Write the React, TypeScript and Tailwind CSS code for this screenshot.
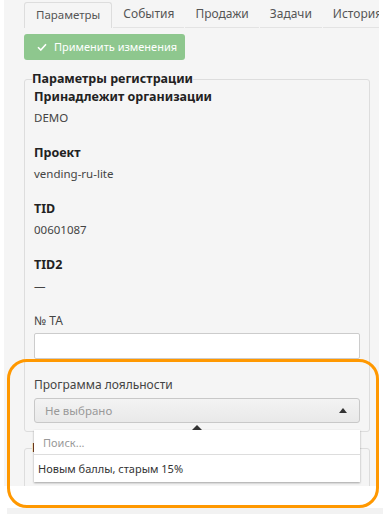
import React from 'react';

const tabs = ['Параметры', 'События', 'Продажи', 'Задачи', 'История'];

const info = [
  { label: 'Принадлежит организации', value: 'DEMO' },
  { label: 'Проект', value: 'vending-ru-lite' },
  { label: 'TID', value: '00601087' },
  { label: 'TID2', value: '—' },
];

const App: React.FC = () => {
  return (
    <div className="relative w-[383px] h-[514px] bg-white overflow-hidden font-['Noto_Sans',sans-serif] text-[#333]">
      <div className="ml-[4px] w-[375px] h-[486px] bg-[#f5f5f5] overflow-hidden">
        {/* tabs */}
        <div className="flex pl-[20px] pt-[2px] h-[28px] whitespace-nowrap">
          {tabs.map((t, i) =>
            i === 0 ? (
              <div
                key={t}
                className="px-[11px] h-[26px] leading-[24px] text-[11.5px] text-[#555] border border-b-0 border-[#ddd] rounded-t-[3px] bg-[#f5f5f5]"
              >
                {t}
              </div>
            ) : (
              <div
                key={t}
                className="ml-[1px] px-[10px] h-[26px] leading-[24px] text-[12px] text-[#555] border-b border-[#e3e3e3]"
              >
                {t}
              </div>
            )
          )}
        </div>

        {/* apply button */}
        <div className="pl-[20px] mt-[6px]">
          <button className="flex items-center gap-[7px] h-[26px] w-[161px] pl-[13px] rounded-[3px] bg-[#8ec78e] text-white text-[11px] whitespace-nowrap">
            <svg width="10" height="8" viewBox="0 0 10 8" fill="none">
              <path d="M1 4.2 L3.8 7 L9 1.2" stroke="white" strokeWidth="1.6" />
            </svg>
            Применить изменения
          </button>
        </div>

        {/* registration params */}
        <fieldset className="ml-[20px] mt-[11px] w-[346px] border border-[#ddd] rounded-[3px] px-[9px] pb-[8px]">
          <legend className="-ml-[2px] px-0 text-[12.5px] font-bold leading-[16px] text-[#222]">
            Параметры регистрации
          </legend>
          <div className="pt-[1px]">
            {info.map((row) => (
              <div key={row.label} className="mb-[17px]">
                <div className="text-[12.5px] font-bold leading-[18px] text-[#222]">{row.label}</div>
                <div className="mt-[3px] text-[11.5px] leading-[18px] text-[#444]">{row.value}</div>
              </div>
            ))}

            <div className="text-[12px] leading-[18px] text-[#444]">№ TA</div>
            <input className="mt-[3px] block w-full h-[26px] bg-white border border-[#ccc] rounded-[2px]" />

            <div className="mt-[17px] text-[12px] leading-[18px] text-[#444]">Программа лояльности</div>
            <div className="relative mt-[4px]">
              <div className="flex items-center justify-between h-[25px] pl-[10px] pr-[12px] rounded-[3px] border border-[#c8c8c8] bg-gradient-to-b from-[#f3f3f3] to-[#e9e9e9] text-[11.5px] text-[#999]">
                <span>Не выбрано</span>
                <svg width="8" height="5" viewBox="0 0 8 5">
                  <path d="M0 5 L4 0 L8 5 Z" fill="#333" />
                </svg>
              </div>

              {/* dropdown */}
              <div className="absolute left-0 top-[32px] w-[326px] z-10">
                <svg
                  className="absolute -top-[5px] left-[158px]"
                  width="10"
                  height="5"
                  viewBox="0 0 10 5"
                >
                  <path d="M0 5 L5 0 L10 5 Z" fill="#333" />
                </svg>
                <div className="bg-white shadow-[0_1px_2px_rgba(0,0,0,0.35)]">
                  <div className="h-[25px] leading-[25px] pl-[9px] text-[11px] text-[#999] border-b border-[#ddd]">
                    Поиск...
                  </div>
                  <div className="h-[27px] leading-[27px] pl-[4px] text-[11px] text-[#333]">
                    Новым баллы, старым 15%
                  </div>
                </div>
              </div>
            </div>
          </div>
        </fieldset>

        {/* next fieldset, mostly hidden under the dropdown */}
        <fieldset className="ml-[20px] mt-[8px] w-[346px] h-[80px] border border-[#ddd] rounded-[3px] px-[9px]">
          <legend className="-ml-[2px] px-0 text-[12.5px] font-bold leading-[16px] text-[#222]">
            Программа
          </legend>
        </fieldset>
      </div>

      <div className="absolute left-[7px] right-0 bottom-0 h-[6px] bg-[#f2f2f2]" />

      {/* highlight outline */}
      <div className="absolute left-[7px] top-[359px] w-[372px] h-[149px] border-[3px] border-[#ff9800] rounded-[20px] pointer-events-none z-20" />
    </div>
  );
};

export default App;
